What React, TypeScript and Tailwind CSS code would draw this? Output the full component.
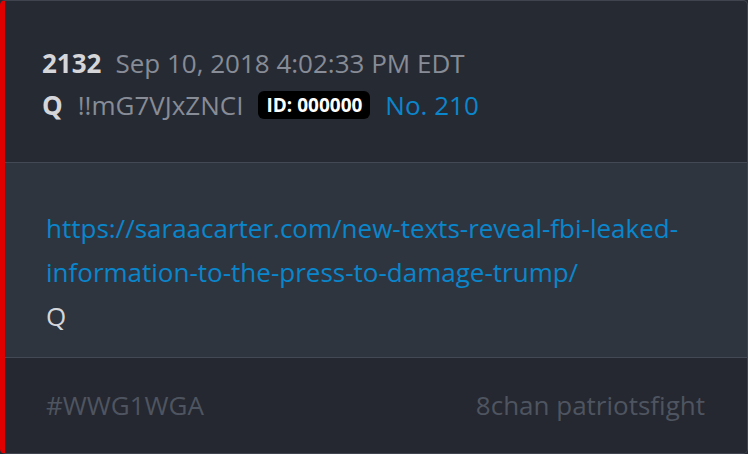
export default function App() {
  return (
    <div className="w-[748px] h-[454px] bg-[#262a33]" style={{ fontFamily: '"Open Sans", sans-serif' }}>
      <div className="flex h-full w-full flex-col overflow-hidden rounded-[5px] border border-[#3f444e] border-l-[5px] border-l-[#e00000] bg-[#262a33]">
        <div className="h-[162px] shrink-0 border-b border-[#444a55] pl-[37px] pt-[45px]">
          <div className="flex items-baseline gap-[14px] text-[26px] leading-[34px]">
            <span className="font-bold text-[#d4d6da]">2132</span>
            <span className="text-[#878c96]">Sep 10, 2018 4:02:33 PM EDT</span>
          </div>
          <div className="mt-[8px] flex items-center gap-[15px] text-[26px] leading-[34px]">
            <span className="font-bold text-[#d4d6da]">Q</span>
            <span className="text-[#878c96]">!!mG7VJxZNCI</span>
            <span className="rounded-[6px] bg-black px-[8px] text-[19px] font-bold leading-[28px] text-white">ID: 000000</span>
            <span className="text-[#0a86cc]">No. 210</span>
          </div>
        </div>
        <div className="h-[195px] shrink-0 border-b border-[#444a55] bg-[#2f353f] pl-[41px] pt-[43px] text-[26px] leading-[44px]">
          <a className="block text-[#0a86cc]">
            https://saraacarter.com/new-texts-reveal-fbi-leaked-
            <br />
            information-to-the-press-to-damage-trump/
          </a>
          <span className="block text-[#d4d6da]">Q</span>
        </div>
        <div className="flex flex-1 items-center justify-between bg-[#252830] pl-[41px] pr-[42px] text-[26px] text-[#4f5560]">
          <span>#WWG1WGA</span>
          <span>8chan patriotsfight</span>
        </div>
      </div>
    </div>
  );
}
